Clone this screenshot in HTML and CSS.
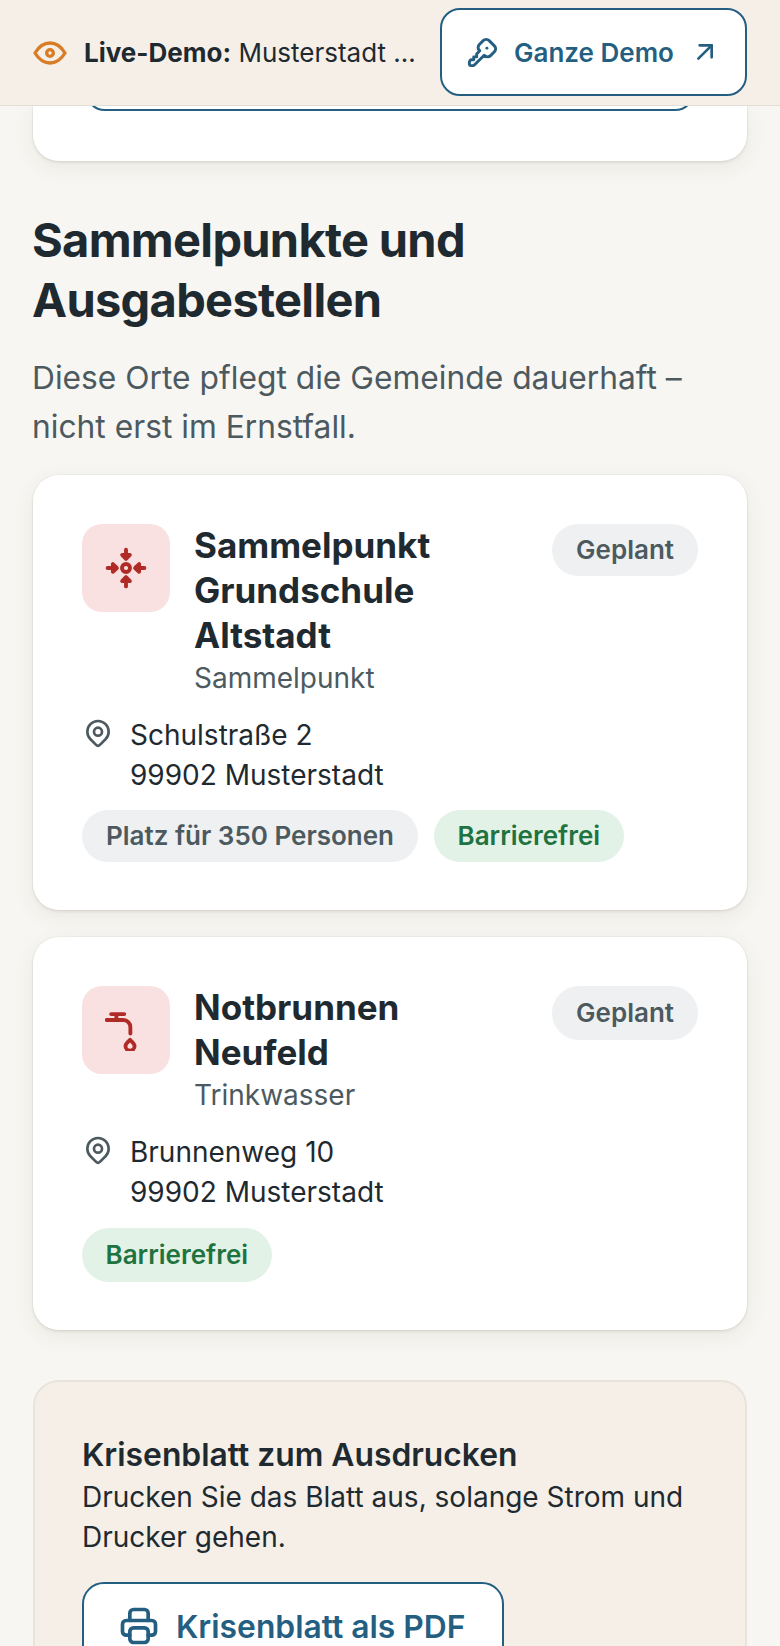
FILE: index.html
```html
<!DOCTYPE html>
<html lang="de">
<head>
    <meta charset="UTF-8">
    <meta name="viewport" content="width=device-width, initial-scale=1.0">
    <title>Live-Demo Musterstadt</title>
    <link rel="stylesheet" href="styles.css">
</head>
<body>

<header class="demo-bar">
    <svg class="icon eye-icon" viewBox="0 0 24 24"><path d="M10 12a2 2 0 1 0 4 0a2 2 0 0 0 -4 0"/><path d="M21 12c-2.4 4 -5.4 6 -9 6c-3.6 0 -6.6 -2 -9 -6c2.4 -4 5.4 -6 9 -6c3.6 0 6.6 2 9 6"/></svg>
    <p class="demo-text"><strong>Live-Demo:</strong> Musterstadt ...</p>
    <a class="demo-button" href="#">
        <svg class="icon key-icon" viewBox="0 0 24 24"><path d="M16.555 3.843l3.602 3.602a2.877 2.877 0 0 1 0 4.069l-2.643 2.643a2.877 2.877 0 0 1 -4.069 0l-.301 -.301l-6.558 6.558a2 2 0 0 1 -1.239 .578l-.175 .008h-1.172a1 1 0 0 1 -.993 -.883l-.007 -.117v-1.172a2 2 0 0 1 .467 -1.284l.119 -.13l.414 -.414h2v-2h2v-2l2.144 -2.144l-.301 -.301a2.877 2.877 0 0 1 0 -4.069l2.643 -2.643a2.877 2.877 0 0 1 4.069 0z"/><path d="M15 9h.01"/></svg>
        <span>Ganze Demo</span>
        <svg class="icon arrow-icon" viewBox="0 0 24 24"><path d="M17 7l-10 10"/><path d="M8 7l9 0l0 9"/></svg>
    </a>
</header>

<main class="page">
    <div class="card card-cut">
        <div class="cut-button"></div>
    </div>

    <h2 class="section-title">Sammelpunkte und Ausgabestellen</h2>
    <p class="section-text">Diese Orte pflegt die Gemeinde dauerhaft – nicht erst im Ernstfall.</p>

    <article class="card place">
        <div class="place-head">
            <div class="place-icon">
                <svg class="icon glyph" viewBox="0 0 24 24"><circle cx="12" cy="12" r="2.300"/><path d="M12 1.500v3"/><path class="solid" d="M9.800 4.500h4.400l-2.200 2.300z"/><path d="M12 22.500v-3"/><path class="solid" d="M9.800 19.500h4.400l-2.200-2.300z"/><path d="M1.500 12h3"/><path class="solid" d="M4.500 9.800v4.400l2.300-2.200z"/><path d="M22.500 12h-3"/><path class="solid" d="M19.500 9.800v4.400l-2.300-2.200z"/></svg>
            </div>
            <div class="place-name">
                <h3>Sammelpunkt Grundschule Altstadt</h3>
                <p>Sammelpunkt</p>
            </div>
            <span class="pill pill-grey">Geplant</span>
        </div>
        <div class="address">
            <svg class="icon pin-icon" viewBox="0 0 24 24"><path d="M9 11a3 3 0 1 0 6 0a3 3 0 0 0 -6 0"/><path d="M17.657 16.657l-4.243 4.243a2 2 0 0 1 -2.827 0l-4.244 -4.243a8 8 0 1 1 11.314 0z"/></svg>
            <p>Schulstraße 2<br>99902 Musterstadt</p>
        </div>
        <div class="tags">
            <span class="pill pill-grey">Platz für 350 Personen</span>
            <span class="pill pill-green">Barrierefrei</span>
        </div>
    </article>

    <article class="card place place-tall">
        <div class="place-head">
            <div class="place-icon">
                <svg class="icon glyph tap-glyph" viewBox="0 0 24 24"><path d="M1 6.300h9.500a4 4 0 0 1 4 4V14"/><path d="M3.500 2.900h7.500M6.500 2.900v3.400"/><path d="M14.300 17.600c-1.400 1.500-2.600 2.300-2.600 3.600a2.600 2.600 0 0 0 5.200 0c0-1.300-1.200-2.100-2.600-3.600z"/></svg>
            </div>
            <div class="place-name">
                <h3>Notbrunnen Neufeld</h3>
                <p>Trinkwasser</p>
            </div>
            <span class="pill pill-grey">Geplant</span>
        </div>
        <div class="address">
            <svg class="icon pin-icon" viewBox="0 0 24 24"><path d="M9 11a3 3 0 1 0 6 0a3 3 0 0 0 -6 0"/><path d="M17.657 16.657l-4.243 4.243a2 2 0 0 1 -2.827 0l-4.244 -4.243a8 8 0 1 1 11.314 0z"/></svg>
            <p>Brunnenweg 10<br>99902 Musterstadt</p>
        </div>
        <div class="tags">
            <span class="pill pill-green">Barrierefrei</span>
        </div>
    </article>

    <section class="print-box">
        <h3>Krisenblatt zum Ausdrucken</h3>
        <p>Drucken Sie das Blatt aus, solange Strom und Drucker gehen.</p>
        <a class="print-button" href="#">
            <svg class="icon printer-icon" viewBox="0 0 24 24"><path d="M17 17h2a2 2 0 0 0 2 -2v-4a2 2 0 0 0 -2 -2h-14a2 2 0 0 0 -2 2v4a2 2 0 0 0 2 2h2"/><path d="M17 9v-4a2 2 0 0 0 -2 -2h-6a2 2 0 0 0 -2 2v4"/><path d="M7 15a2 2 0 0 1 2 -2h6a2 2 0 0 1 2 2v4a2 2 0 0 1 -2 2h-6a2 2 0 0 1 -2 -2z"/></svg>
            <span>Krisenblatt als PDF</span>
        </a>
    </section>
</main>

</body>
</html>
```

FILE: styles.css
```css
html, body {
    margin: 0;
    height: 1646px;
    overflow: hidden;
}

body {
    font-family: Inter, "Liberation Sans", sans-serif;
    background-color: #f8f6f2;
    color: #1f2a30;
}

h2, h3, p {
    margin: 0;
}

.icon {
    fill: none;
    stroke: currentColor;
    stroke-width: 2;
    stroke-linecap: round;
    stroke-linejoin: round;
    flex: none;
}

.demo-bar {
    height: 106px;
    box-sizing: border-box;
    display: flex;
    align-items: center;
    padding: 0 33px;
    background-color: #f5efe8;
    border-bottom: 1px solid #e2ddd5;
    position: relative;
    z-index: 1;
}

.eye-icon {
    width: 40px;
    height: 40px;
    margin-left: -3px;
    color: #d97c26;
    stroke-width: 2;
}

.demo-text {
    margin-left: 14px;
    font-size: 26px;
    white-space: nowrap;
    flex: 1;
}

.demo-text strong {
    font-weight: 700;
}

.demo-button {
    width: 307px;
    height: 88px;
    box-sizing: border-box;
    margin-top: -1px;
    display: flex;
    align-items: center;
    padding: 0 24px 0 23px;
    background-color: #fff;
    border: 2px solid #245f82;
    border-radius: 20px;
    color: #245f82;
    font-size: 26px;
    font-weight: 600;
    text-decoration: none;
}

.key-icon {
    width: 35px;
    height: 35px;
    margin-right: 14px;
}

.arrow-icon {
    width: 32px;
    height: 32px;
    margin-left: auto;
}

.page {
    padding: 0 33px;
}

.card {
    background-color: #fff;
    border-radius: 26px;
    box-shadow: 0 0 0 1px rgba(60, 50, 30, .04), 0 2px 3px rgba(60, 50, 30, .08), 0 6px 22px rgba(60, 50, 30, .07);
}

.card-cut {
    display: flow-root;
    height: 55px;
    padding: 0 52px;
    border-radius: 0 0 26px 26px;
}

/* the rest of this button is scrolled away under the demo bar */
.cut-button {
    height: 41px;
    margin-top: -40px;
    border: 2px solid #245f82;
    border-radius: 20px;
}

.section-title {
    margin: 49px 0 0 -1px;
    font-size: 47px;
    line-height: 60px;
    font-weight: 700;
    letter-spacing: -.7px;
}

.section-text {
    margin: 23px 0 0 -1px;
    font-size: 31.75px;
    line-height: 49px;
    color: #4c5a60;
}

.place {
    margin-top: 27px;
    padding: 49px 49px 48px;
}

.section-text + .place {
    margin-top: 24px;
}

.place-tall .pill {
    height: 54px;
    line-height: 54px;
    border-radius: 27px;
}

.place-tall .tags {
    margin-top: 16px;
}

.place-head {
    display: flex;
    align-items: flex-start;
    gap: 24px;
}

.place-icon {
    width: 88px;
    height: 88px;
    flex: none;
    display: flex;
    align-items: center;
    justify-content: center;
    background-color: #fae1e1;
    border-radius: 20px;
    color: #b02a26;
}

.glyph {
    width: 42px;
    height: 42px;
    stroke-width: 2.2;
}

.glyph .solid {
    fill: currentColor;
}

.tap-glyph {
    stroke-width: 2.2;
}

.place-name {
    flex: 1;
    min-width: 0;
    margin-top: -1px;
}

.place-name h3 {
    font-size: 35px;
    line-height: 45px;
    font-weight: 700;
}

.place-name p {
    font-size: 28px;
    line-height: 40px;
    color: #4c5a60;
}

.pill {
    display: inline-block;
    padding: 0 24px;
    height: 52px;
    line-height: 52px;
    border-radius: 26px;
    font-size: 26px;
    font-weight: 600;
    white-space: nowrap;
    flex: none;
}

.pill-grey {
    background-color: #eef0f1;
    color: #4c5a60;
}

.pill-green {
    padding: 0 23.5px;
    background-color: #e2f2e7;
    color: #1f7340;
}

.address {
    display: flex;
    align-items: flex-start;
    gap: 16px;
    margin-top: 17px;
    font-size: 28px;
    line-height: 40px;
}

.pin-icon {
    width: 32px;
    height: 32px;
    margin-top: 2px;
    color: #4c5a60;
}

.tags {
    display: flex;
    gap: 16px;
    margin-top: 15px;
}

.print-box {
    margin-top: 50px;
    padding: 51px 47px 48px;
    background-color: #f5efe8;
    border: 2px solid #e9e4da;
    border-radius: 26px;
}

.print-box h3 {
    font-size: 31.8px;
    line-height: 44px;
    font-weight: 600;
}

.print-box p {
    font-size: 28px;
    line-height: 40px;
}

.print-button {
    width: 422px;
    height: 88px;
    box-sizing: border-box;
    margin-top: 25px;
    display: flex;
    align-items: center;
    gap: 15px;
    padding: 0 33px;
    background-color: #fff;
    border: 2px solid #245f82;
    border-radius: 22px;
    color: #245f82;
    font-size: 31.8px;
    font-weight: 600;
    text-decoration: none;
}

.printer-icon {
    width: 44px;
    height: 44px;
}
```
